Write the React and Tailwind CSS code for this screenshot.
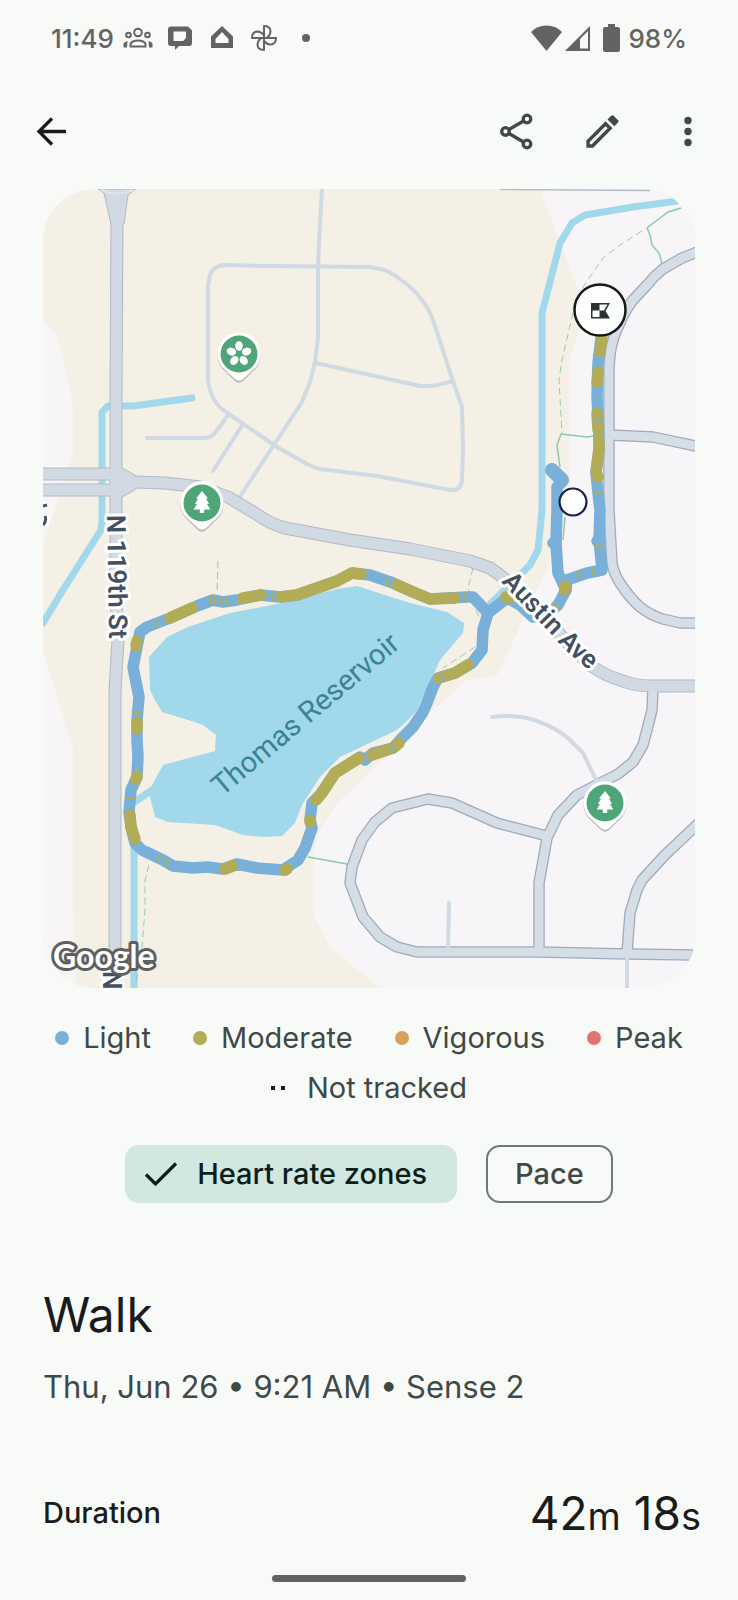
import { useState } from "react";

const LIGHT = "#78b0da";
const MODERATE = "#b2ac57";

const ZONES = [
  { label: "Light", dot: "bg-[#78b0da]" },
  { label: "Moderate", dot: "bg-[#b2ac57]" },
  { label: "Vigorous", dot: "bg-[#d8a05a]" },
  { label: "Peak", dot: "bg-[#e07272]" },
];

const SERVICE_ROADS = [
  "M322 189L319 243L318 267V337L315 362L310 382L302 402L287 425L239 498",
  "M270 266L223 265Q210 267 209 280L208 287V377Q209 398 223 410L277 447L307 464Q314 468 320 469L377 476L450 490Q461 491 462 480L463 450L462 407L453 381L433 320Q429 309 422 300Q416 292 408 285Q394 274 385 270L370 267Z",
  "M316 363L420 386H433L453 381",
  "M147 438H203Q211 438 215 433L229 414",
  "M243 424L213 471",
  "M492 717Q517 714 537 721Q556 728 568 738L583 753L597 782",
  "M449 903L448 950",
  "M627 956V990",
];

const LOCAL_ROADS = [
  "M700 251L682 258L663 269Q654 276 647 285L633 300Q623 314 620 323Q612 338 610 355L609 367V510L612 563Q614 574 620 583Q629 597 640 607Q652 616 663 619L680 623H700",
  "M610 435L653 437L700 447",
  "M653 688L652 710L649 722L643 745L633 762L618 774L577 795L558 815L547 838L539 883V952",
  "M547 836L497 823L452 803L428 799L392 808L375 822L362 840L352 867L350 883L363 917L380 937L397 947L417 952H540L627 954L700 955",
  "M627 953L630 913L637 890L642 880L665 855L700 822",
];

const MAIN_ROADS = [
  "M40 474H116",
  "M40 490H116",
  "M116 482H134L165 483L200 487L228 497L258 515Q268 523 285 528L350 540L410 549L470 561L490 568Q520 588 558 632Q575 652 593 667Q606 676 623 681Q636 686 650 686H700",
  "M117 215L116 400V600L118 640L115 690V995",
];

const TRAILS = [
  "M681 208L668 212L647 228L650 235L652 245L659 253L662 263",
  "M594 436L587 437L561 434L557 445L560 467",
  "M565 517L563 540",
  "M308 857L347 864",
];

const DASHED_TRAILS = [
  "M642 231L620 245L603 258L583 287L573 313L562 360L559 380L562 433",
  "M218 561L217 592",
  "M473 568L468 588L480 620",
  "M475 647L443 668",
  "M149 865L145 880V910L142 947L136 983",
];

const ROUTE = [
  "M488 613L473 597L467 597L430 599L413 592L393 583L370 575L352 573L337 581L297 595L280 597L260 595L237 600L223 602L213 600L197 606L170 618L147 627L140 632L137 647L133 667L139 697L137 720V740L138 757L137 777L131 790L129 812L131 827L135 843L142 850L163 860L173 866L193 868L207 867L223 869L237 864L257 868L283 870L298 860L305 848L312 828L310 820L312 803L320 795L335 773L360 757L365 760L373 753L393 748L402 738L413 727L423 712L427 703L433 687L438 678L455 673L472 663L482 650L483 630L488 613L507 598L520 605L533 617L545 617L558 605L566 590L567 580L587 573L602 570L599 540L600 510L598 493L596 473L599 450V437L597 397L598 363L602 330",
  "M566 590L558 573L556 543L557 510L557 487L562 482L552 469",
];

const MODERATE_STRETCHES = [
  "M361 574L352 573L337 581L297 595L281 597",
  "M455 598L430 599L413 592L397 585",
  "M261 595L243 598",
  "M192 608L170 618",
  "M137 641L136 645",
  "M137 722V729",
  "M137 776L136 779",
  "M130 815L131 827L135 839",
  "M225 869L233 866",
  "M285 870L287 869",
  "M310 820L310 822",
  "M316 800L322 793L335 773L359 758",
  "M372 755L393 748L399 743",
  "M439 678L455 673L468 665",
  "M506 597L510 598",
  "M565 586L565 590",
  "M599 449L596 471L598 477",
  "M599 446V440",
  "M598 430L597 413",
  "M597 383L598 372",
  "M600 353L602 336",
];

// short flecks where the zone flips for only a few samples
const FLECKS = [
  { d: "M157 619Q154 624 158 628", color: MODERATE },
  { d: "M211 596Q208 600 212 605M215 595Q212 600 216 605", color: MODERATE },
  { d: "M219 597Q223 601 221 606", color: MODERATE },
  { d: "M228 597Q225 601 229 606M239 595Q236 600 240 604", color: MODERATE },
  { d: "M273 591Q270 596 273 601", color: MODERATE },
  { d: "M390 577Q385 581 388 586", color: MODERATE },
  { d: "M466 592Q463 597 466 602", color: MODERATE },
  { d: "M131 649Q136 653 142 649M132 711Q137 715 142 712", color: MODERATE },
  { d: "M125 799H135", color: MODERATE },
  { d: "M162 855Q157 857 158 862M169 859Q165 862 166 867", color: MODERATE },
  { d: "M237 860Q241 864 237 868", color: LIGHT },
  { d: "M391 744Q394 748 392 753", color: LIGHT },
  { d: "M439 674Q444 677 444 682", color: LIGHT },
  { d: "M593 492Q598 495 603 492M594 545Q599 549 603 545", color: MODERATE },
  { d: "M593 419Q598 423 603 419M592 387Q597 391 602 387M593 355Q598 359 603 356", color: LIGHT },
  { d: "M580 570Q577 574 580 579M594 567Q591 571 594 576", color: MODERATE },
  { d: "M552 604Q557 608 562 608M519 600Q524 603 522 609M530 611Q535 615 533 620", color: MODERATE },
];

function MapPin({ x, y, children }) {
  return (
    <g transform={`translate(${x} ${y})`}>
      <path
        d="M-4 25.5L-17 13A21.5 21.5 0 1 1 17 13L4 25.5Q0 29 -4 25.5Z"
        fill="#8b8f94"
        opacity="0.55"
        transform="translate(0 1.5)"
      />
      <path d="M-4 25L-17 13A21.5 21.5 0 1 1 17 13L4 25Q0 28.5 -4 25Z" fill="#fff" />
      <circle r="18.5" fill="#4ea578" />
      {children}
    </g>
  );
}

function TreeIcon() {
  return (
    <path
      d="M0 -12L6 -4.5H4L7 1H5L8.5 6.5H2.2V10H-2.2V6.5H-8.5L-5 1H-7L-4 -4.5H-6Z"
      fill="#fff"
    />
  );
}

function FlowerIcon() {
  return (
    <g fill="#fff">
      {[0, 72, 144, 216, 288].map((angle) => (
        <ellipse key={angle} cy="-8" rx="3.8" ry="4.8" transform={`rotate(${angle})`} />
      ))}
    </g>
  );
}

function RouteMap() {
  return (
    <svg
      viewBox="43 189 652 799"
      className="block w-full rounded-[52px]"
      role="img"
      aria-label="Map of the walk around Thomas Reservoir"
      fill="none"
    >
      <rect x="43" y="189" width="652" height="799" fill="#f4f0e5" />
      <path
        d="M43 318L55 333L62 353L72 400L73 410V453L52 517L43 545ZM43 650L67 730L73 748V900L76 988H43Z"
        fill="#f7f5f7"
      />
      <path
        d="M540 189L578 290L579 333L570 355V507L545 573L523 620L497 676L467 680L433 710L383 760L337 803L320 830L314 850V915L330 947L380 988H695V189Z"
        fill="#f7f5f7"
      />
      <path d="M500 189.500L650 190.500" stroke="#b4bcc8" strokeWidth="1.500" />

      {/* water */}
      <g stroke="#a1d8eb" strokeWidth="7" strokeLinejoin="round">
        <path d="M192 398L133 406H108L102 412V522L101 530L63 590L43 623" strokeLinecap="round" />
        <path d="M134 840V990" />
        <path d="M678 201L633 207L585 215L572 223L560 243L542 313V510L538 550L530 565L484 610" />
        <path d="M155 788L133 803" />
      </g>
      <path
        d="M149 657L167 637L188 627L230 613L277 604L337 589L357 586L410 603L447 612L464 623L463 633L440 660L430 683L417 710L408 720L397 730L340 757L320 777L302 805L295 823L282 836L263 837L243 835L215 825L168 822L155 817L150 797L152 785L163 765L215 751L216 735L203 725L188 720L162 712L155 700L150 690Z"
        fill="#a1d8eb"
      />

      {/* trails */}
      <g stroke="#8cc7ae" strokeWidth="1.500">
        {TRAILS.map((d) => (
          <path key={d} d={d} />
        ))}
        <g strokeDasharray="7 4" strokeWidth="1" opacity="0.9">
          {DASHED_TRAILS.map((d) => (
            <path key={d} d={d} />
          ))}
        </g>
      </g>

      {/* roads */}
      <g stroke="#9fa9ba" strokeWidth="11.500" strokeLinejoin="round">
        {LOCAL_ROADS.map((d) => (
          <path key={d} d={d} />
        ))}
      </g>
      <g stroke="#d1d9e3" strokeWidth="4" strokeLinejoin="round" strokeLinecap="round">
        {SERVICE_ROADS.map((d) => (
          <path key={d} d={d} />
        ))}
      </g>
      <g stroke="#b0b9c7" strokeWidth="13" strokeLinejoin="round">
        {MAIN_ROADS.map((d) => (
          <path key={d} d={d} />
        ))}
      </g>
      <path d="M98 189L104 193L111 224H124L128 195L136 189ZM110 467L122 468L135 475V490L122 497H110Z" fill="#d1d9e3" stroke="#b0b9c7" />
      <g stroke="#d5dde6" strokeWidth="9" strokeLinejoin="round">
        {LOCAL_ROADS.map((d) => (
          <path key={d} d={d} />
        ))}
      </g>
      <g stroke="#d1d9e3" strokeWidth="11" strokeLinejoin="round">
        {MAIN_ROADS.map((d) => (
          <path key={d} d={d} />
        ))}
      </g>
      <path d="M101 190Q117 197 133 190" stroke="#dfe5ec" strokeWidth="2" />

      {/* recorded route */}
      <g strokeLinejoin="round" strokeLinecap="round">
        <g stroke={LIGHT} strokeWidth="11.500">
          {ROUTE.map((d) => (
            <path key={d} d={d} />
          ))}
          <path d="M553 543L556 543M597 541L600 541" />
          <path d="M552 470L562 480" strokeWidth="14" />
        </g>
        <g stroke={MODERATE} strokeWidth="11.500">
          {MODERATE_STRETCHES.map((d) => (
            <path key={d} d={d} />
          ))}
        </g>
      </g>
      {FLECKS.map(({ d, color }) => (
        <path key={d} d={d} stroke={color} strokeWidth="2" />
      ))}

      {/* labels */}
      <g
        className="font-[Roboto,sans-serif]"
        fontSize="26"
        fontWeight="600"
        fill="#44505f"
        stroke="#fff"
        strokeWidth="6"
        strokeLinejoin="round"
        paintOrder="stroke"
      >
        <text transform="translate(107 515) rotate(89)">N 119th St</text>
        <text transform="translate(103 971) rotate(90)">N</text>
        <path id="austin-ave" d="M501 582L552 635Q568 655 596 675" stroke="none" fill="none" />
        <text>
          <textPath href="#austin-ave">Austin Ave</textPath>
        </text>
      </g>
      <path d="M43 506L47 505M44 525Q47 521 45 516" stroke="#fff" strokeWidth="7" />
      <path d="M43 506L47 505M43 525Q47 521 45 516" stroke="#44505f" strokeWidth="3" />
      <text
        className="font-[Roboto,sans-serif]"
        transform="translate(222 797) rotate(-40)"
        fontSize="29"
        fill="#3d8291"
      >
        Thomas Reservoir
      </text>

      <MapPin x={239} y={354}>
        <FlowerIcon />
      </MapPin>
      <MapPin x={202} y={503}>
        <TreeIcon />
      </MapPin>
      <MapPin x={605} y={803}>
        <TreeIcon />
      </MapPin>

      {/* start and finish */}
      <circle cx="573" cy="502" r="13.500" fill="#fff" stroke="#141f4b" strokeWidth="2.200" />
      <circle cx="600" cy="310" r="25.500" fill="#fdfffd" stroke="#161918" strokeWidth="2.500" />
      <path d="M591 303H610L605.500 311L610 318.500H591Z" fill="#2b3331" />
      <path d="M599.500 304.500H607.500L604 310.500H599.500ZM592.500 310.500H599.500V317H592.500Z" fill="#fdfffd" />

      <text
        className="font-[Lato,sans-serif]"
        x="53"
        y="968"
        fontSize="32"
        fontWeight="700"
        fill="#fff"
        stroke="#5f5f5f"
        strokeWidth="6"
        strokeLinejoin="round"
        paintOrder="stroke"
      >
        Google
      </text>
    </svg>
  );
}

function StatusBar() {
  return (
    <div className="flex h-[76px] items-center justify-between px-[51px] text-[26px] font-medium text-[#636363]">
      <div className="flex items-center">
        <span className="mr-[3px]">11:49</span>
        <span className="flex w-[42px] justify-center">
          <svg width="30" height="22" viewBox="0 0 30 22" fill="none" stroke="currentColor" strokeWidth="2">
            <circle cx="15" cy="5.500" r="3.800" />
            <circle cx="5.500" cy="8" r="2.300" />
            <circle cx="24.500" cy="8" r="2.300" />
            <path d="M7.500 19.500V17Q9 13.500 15 13.500T22.500 17V19.500Z" />
            <path d="M.5 20.500V16.500Q1.500 14.500 4.500 14L4 20.500ZM29.500 20.500V16.500Q28.500 14.500 25.500 14L26 20.500Z" fill="currentColor" stroke="none" />
          </svg>
        </span>
        <span className="flex w-[42px] justify-center">
          <svg width="24" height="24" viewBox="0 0 24 24" fill="none">
            <path d="M3 .5H20L24 4.500V17Q24 20 21 20H11L7 24V20H3Q0 20 0 17V3.500Q0 .5 3 .5ZM5.500 5.500V15H15L18 12V5.500Z" fill="currentColor" fillRule="evenodd" />
          </svg>
        </span>
        <span className="flex w-[42px] justify-center">
          <svg width="22" height="24" viewBox="0 0 22 24">
            <path d="M11 0L22 10.500V22H0V10.500ZM11 6L4.500 13V17H17.500V13Z" fill="currentColor" fillRule="evenodd" />
          </svg>
        </span>
        <span className="flex w-[42px] justify-center">
          <svg width="28" height="28" viewBox="-14 -14 28 28" fill="none" stroke="currentColor" strokeWidth="2" strokeLinejoin="round">
            {[0, 90, 180, 270].map((angle) => (
              <path key={angle} d="M0 0V-12Q6 -12 6.500 -7Q6.500 -3 3 0Z" transform={`rotate(${angle})`} />
            ))}
          </svg>
        </span>
        <span className="flex w-[42px] justify-center">
          <span className="size-2 rounded-full bg-[#636363]" />
        </span>
      </div>
      <div className="flex items-center">
        <svg width="31" height="26" viewBox="0 0 31 26">
          <path d="M15.500 26L0 7Q6 .5 15.500 .5T31 7Z" fill="currentColor" />
        </svg>
        <svg className="ml-[3px]" width="25" height="26" viewBox="0 0 25 26">
          <path d="M0 26L25 1V26ZM15 14V23.500H23V6Z" fill="currentColor" fillRule="evenodd" />
        </svg>
        <svg className="ml-[13px]" width="17" height="28" viewBox="0 0 17 28">
          <path d="M5 0H12V3H15Q17 3 17 5V26Q17 28 15 28H2Q0 28 0 26V5Q0 3 2 3H5Z" fill="currentColor" />
        </svg>
        <span className="ml-2">98%</span>
      </div>
    </div>
  );
}

function Header() {
  return (
    <header className="flex h-[110px] items-center justify-between pr-7 pl-[30px] text-[#3f4946]">
      <button type="button" aria-label="Back" className="text-[#191c1b]">
        <svg width="43" height="43" viewBox="0 0 43 43" fill="none" stroke="currentColor" strokeWidth="3.300">
          <path d="M36 21.500H9M22 8.500L9 21.500L22 34.500" />
        </svg>
      </button>
      <div className="flex items-center gap-[43px]">
        <button type="button" aria-label="Share">
          <svg width="43" height="43" viewBox="0 0 43 43" fill="none" stroke="currentColor" strokeWidth="3.300">
            <circle cx="10.500" cy="21.500" r="3.800" />
            <circle cx="32" cy="9" r="3.800" />
            <circle cx="32" cy="34" r="3.800" />
            <path d="M14 19.500L28.500 11M14 23.500L28.500 32" />
          </svg>
        </button>
        <button type="button" aria-label="Edit">
          <svg width="43" height="43" viewBox="0 0 24 24" fill="currentColor">
            <path d="M3 21V17L13.700 6.300L17.600 10.200L6.800 21ZM4.900 19.100H6L14.900 10.200L13.700 9L4.900 17.900Z" fillRule="evenodd" />
            <path d="M14.800 5.300L16.800 3.200Q17.500 2.600 18.200 3.200L20.700 5.700Q21.200 6.300 20.600 7L18.600 9Z" />
          </svg>
        </button>
        <button type="button" aria-label="More options">
          <svg width="43" height="43" viewBox="0 0 43 43" fill="currentColor">
            <circle cx="21" cy="10.500" r="3.700" />
            <circle cx="21" cy="21.500" r="3.700" />
            <circle cx="21" cy="32.500" r="3.700" />
          </svg>
        </button>
      </div>
    </header>
  );
}

export default function App() {
  const [mode, setMode] = useState("zones");

  const chip = "flex h-[58px] items-center rounded-[14px] text-[29px] font-medium";
  const selected = "bg-[#d2e7e0] pr-[30px] pl-[18px] text-[#0b1f1a]";
  const unselected = "border-2 border-[#6f7976] px-[27px] text-[#3f4946]";

  return (
    <div className="flex min-h-screen flex-col bg-[#f8faf8] font-[Inter,sans-serif] text-[#191c1b]">
      <StatusBar />
      <Header />

      <main className="flex-1 pt-[3px]">
        <div className="px-[43px]">
          <RouteMap />

          <ul className="mt-[25px] flex flex-wrap justify-center gap-x-[42px] text-[29px] leading-[50px] text-[#3f4946]">
            {ZONES.map((zone) => (
              <li key={zone.label} className="flex items-center gap-[14px]">
                <span className={`size-[14px] rounded-full ${zone.dot}`} />
                {zone.label}
              </li>
            ))}
            <li className="flex items-center gap-[22px]">
              <span className="flex gap-[6px]">
                <span className="size-1 bg-[#191c1b]" />
                <span className="size-1 bg-[#191c1b]" />
              </span>
              Not tracked
            </li>
          </ul>

          <div className="mt-8 flex justify-center gap-[29px]">
            <button
              type="button"
              aria-pressed={mode === "zones"}
              onClick={() => setMode("zones")}
              className={`${chip} ${mode === "zones" ? selected : unselected}`}
            >
              {mode === "zones" ? (
                <svg className="mr-[18px]" width="36" height="36" viewBox="0 0 36 36" fill="none" stroke="currentColor" strokeWidth="3.300">
                  <path d="M3 18.500L12.500 28L33 7.500" />
                </svg>
              ) : null}
              Heart rate zones
            </button>
            <button
              type="button"
              aria-pressed={mode === "pace"}
              onClick={() => setMode("pace")}
              className={`${chip} ${mode === "pace" ? selected : unselected}`}
            >
              Pace
            </button>
          </div>
        </div>

        <section className="mt-20 pr-[37px] pl-[43px]">
          <h1 className="text-[48px] leading-[64px]">Walk</h1>
          <p className="mt-[18px] text-[31px] leading-[44px] text-[#3f4946]">
            Thu, Jun 26 • 9:21 AM • Sense 2
          </p>
          <div className="mt-[72px] flex h-16 items-center justify-between">
            <span className="text-[29px] font-medium">Duration</span>
            <span className="text-[46px]">
              42<span className="text-[38px]">m</span> 18<span className="text-[38px]">s</span>
            </span>
          </div>
        </section>
      </main>

      <div className="flex justify-center pt-7 pb-[18px]">
        <div className="h-[7px] w-[194px] rounded-full bg-[#636363]" />
      </div>
    </div>
  );
}
